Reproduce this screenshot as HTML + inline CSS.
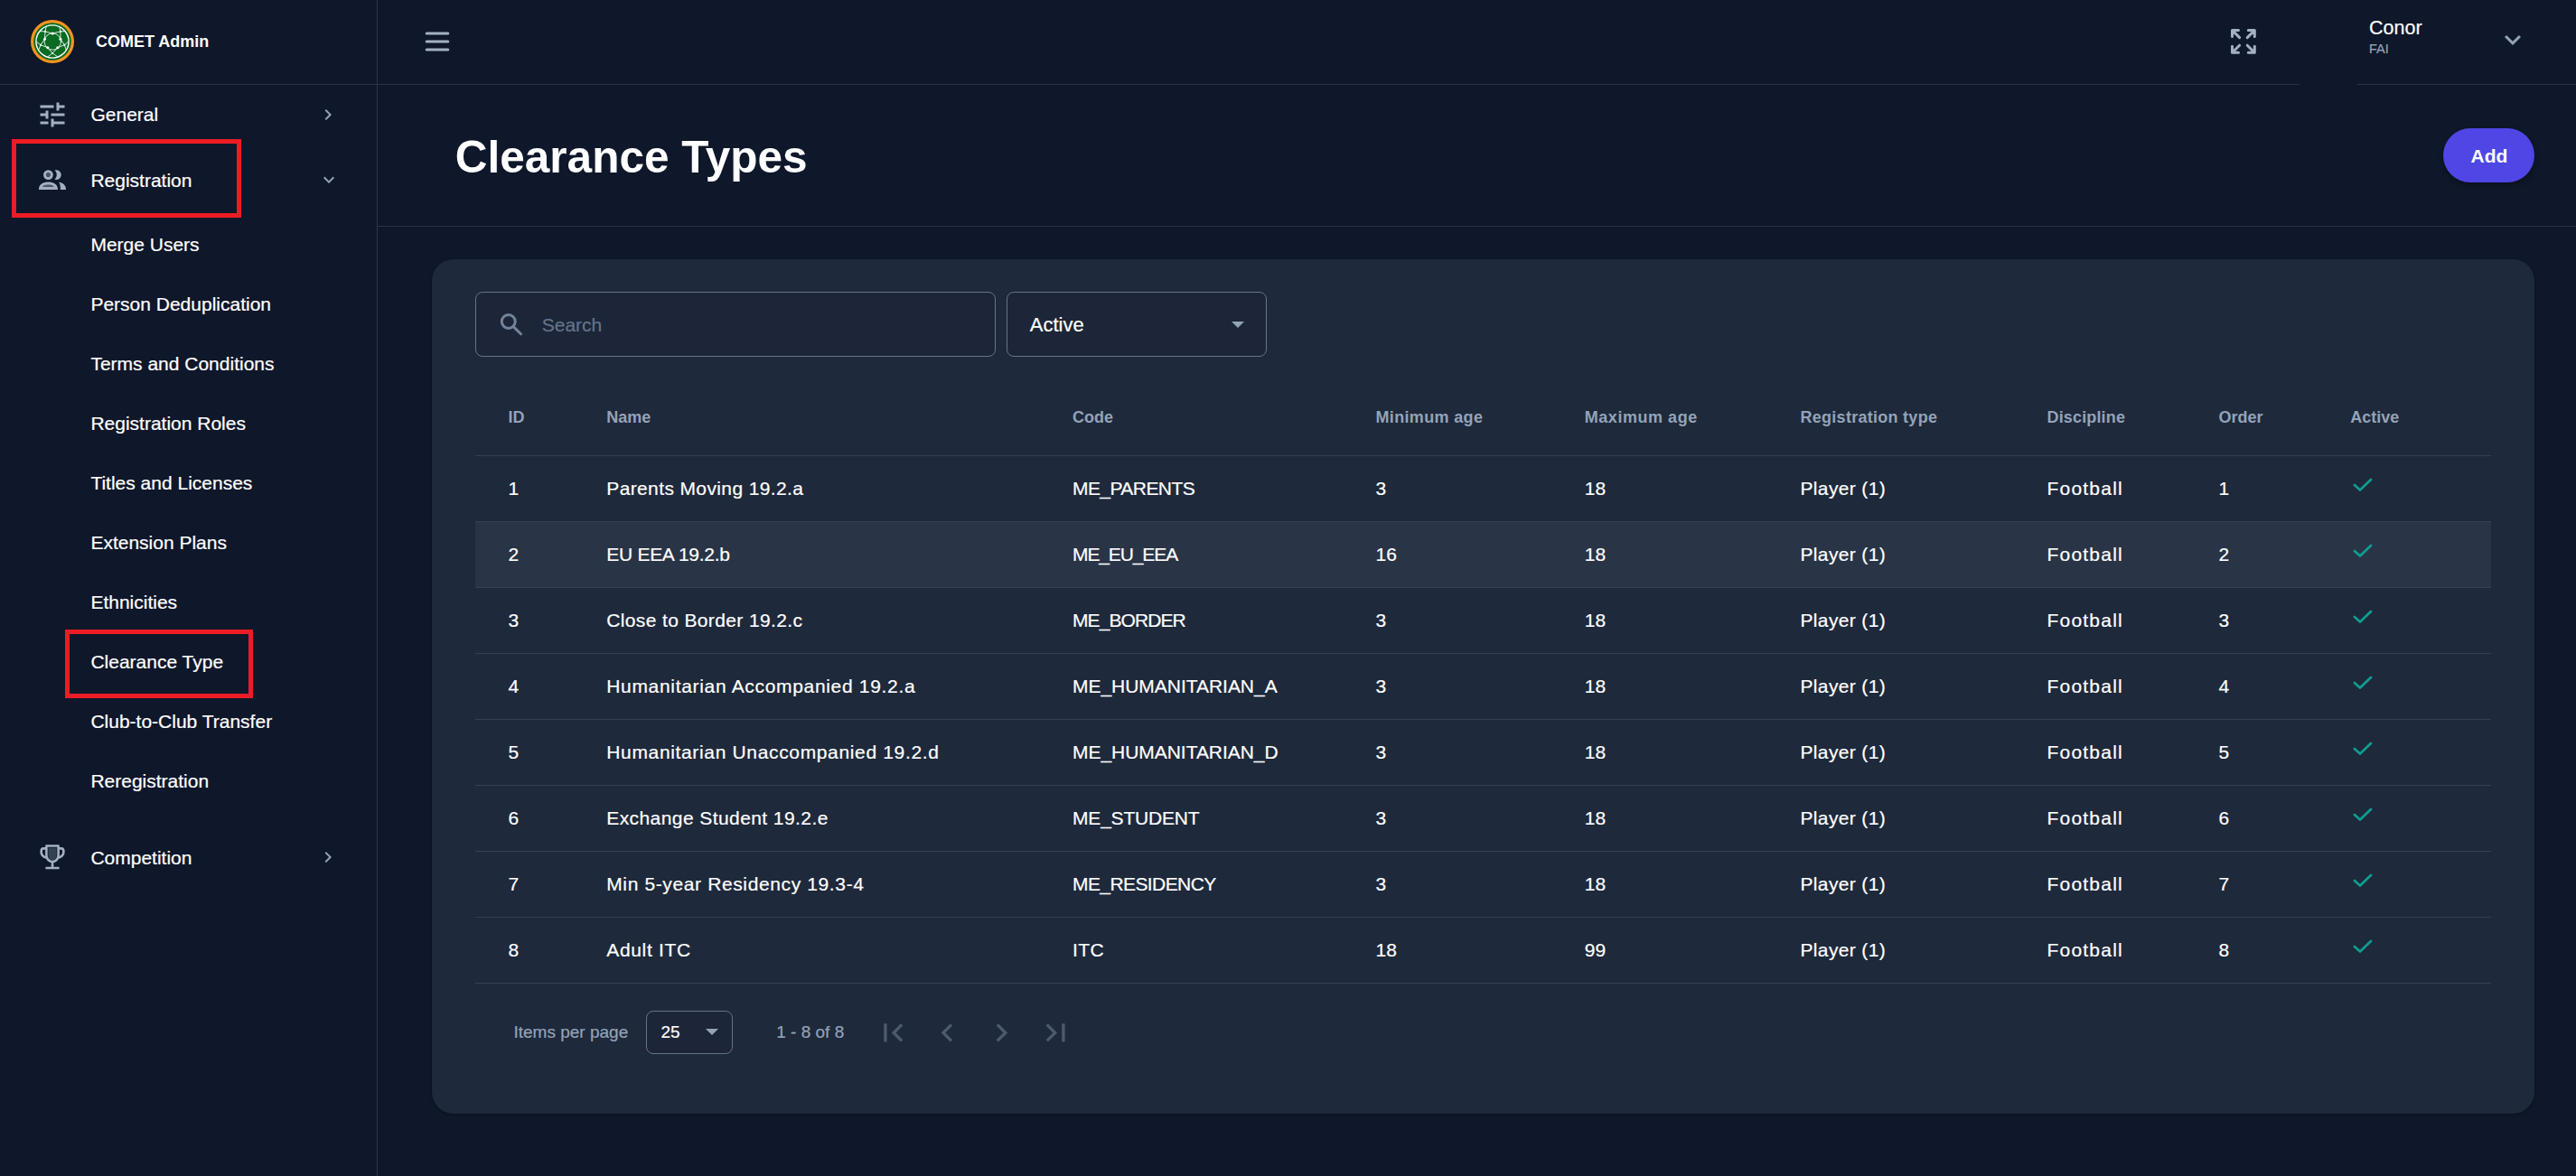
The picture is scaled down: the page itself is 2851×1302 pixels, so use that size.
<!DOCTYPE html>
<html><head><meta charset="utf-8"><title>Clearance Types</title>
<style>
html,body{margin:0;padding:0;}
body{width:2851px;height:1302px;background:#0f172a;position:relative;overflow:hidden;font-family:"Liberation Sans",sans-serif;}
.t{position:absolute;white-space:nowrap;}
.n{-webkit-text-stroke:0.2px currentColor;}
.r{position:absolute;box-sizing:border-box;}
svg{position:absolute;overflow:visible;}
</style></head><body>
<div class="r" style="left:417px;top:0px;width:1px;height:1302px;background:#2c3748"></div>
<div class="r" style="left:0px;top:93px;width:417px;height:1px;background:#283344"></div>
<svg style="left:34px;top:22px" width="48" height="48" viewBox="0 0 48 48">
<circle cx="24" cy="24" r="24" fill="#f7931e"/>
<circle cx="24" cy="24" r="20.8" fill="#0a6b22"/>
<circle cx="24" cy="24" r="18.1" fill="none" stroke="#fff" stroke-width="1.4"/>
<g stroke="#fff" stroke-width="0.85" fill="none" stroke-linecap="round">
<circle cx="24.3" cy="24" r="9.2"/>
<path d="M16 12.9 L24.2 15 L32.9 12.9"/>
<path d="M16 12.9 L17.2 7.2 M32.9 12.9 L31.8 7.2 M16 12.9 L10 12.6 M32.9 12.9 L38 12.6"/>
<path d="M16 12.9 L15.5 21.2 M32.9 12.9 L32.9 21.2"/>
<path d="M15.5 21.2 L11 27.7 L18.9 30.8 M32.9 21.2 L37.4 27.7 L29.8 30.8"/>
<path d="M11 27.7 L6.8 24.6 M11 27.7 L8.9 33 M37.4 27.7 L41.2 24.6 M37.4 27.7 L39.1 33"/>
<path d="M18.9 30.8 L24.1 37 L29.8 30.8 M24.1 37 L19.3 40.5 M24.1 37 L29.3 40.5"/>
</g>
<g fill="#fff"><circle cx="24.2" cy="15" r="1.6"/><circle cx="15.5" cy="21.2" r="1.5"/><circle cx="32.9" cy="21.2" r="1.5"/>
<circle cx="18.9" cy="30.8" r="1.5"/><circle cx="29.8" cy="30.8" r="1.5"/><circle cx="16" cy="12.9" r="1"/><circle cx="32.9" cy="12.9" r="1"/>
<circle cx="11" cy="27.7" r="1"/><circle cx="37.4" cy="27.7" r="1"/><circle cx="24.1" cy="37" r="1"/></g>
</svg>
<div class="t" style="left:106.00px;top:36.76px;font-size:18px;line-height:18px;color:#ffffff;font-weight:700;">COMET Admin</div>
<svg style="left:40px;top:109px" width="36" height="36" viewBox="0 0 24 24"><path fill="#a3b0c2" d="M3 17v2h6v-2H3zM3 5v2h10V5H3zm10 16v-2h8v-2h-8v-2h-2v6h2zM7 9v2H3v2h4v2h2V9H7zm14 4v-2H11v2h10zm-6-4h2V7h4V5h-4V3h-2v6z"/></svg>
<div class="t n" style="left:100.50px;top:116.22px;font-size:21px;line-height:21px;color:#ffffff;font-weight:400;">General</div>
<svg style="left:351px;top:115px" width="24" height="24" viewBox="0 0 24 24"><path fill="#94a3b8" d="M10 6L8.59 7.41 13.17 12l-4.58 4.59L10 18l6-6z"/></svg>
<svg style="left:36px;top:176px" width="44" height="44" viewBox="0 0 44 44">
<circle cx="17.4" cy="17.6" r="3.85" fill="none" stroke="#a3b0c2" stroke-width="3.1"/>
<circle cx="17.4" cy="17.6" r="2.2" fill="#4a5568"/>
<path fill="#a3b0c2" d="M24.6 12.5 A5.4 5.4 0 1 1 24.6 22.7 A7 7 0 0 0 24.6 12.5z"/>
<path fill="#a3b0c2" d="M6.9 33.9 C6.9 28 12 25.6 17.45 25.6 C23 25.6 28 28 28 33.9z"/>
<path fill="#4a5568" d="M10.8 31 C12 29 14.5 28.6 17.4 28.6 C20.3 28.6 22.8 29 23.9 31z"/>
<path fill="#a3b0c2" d="M29.2 25.8 C33.5 26.5 37 28.6 37 33.9 H30.9 C30.9 30 30.5 27.5 29.2 25.8z"/>
</svg>
<div class="t n" style="left:100.40px;top:188.62px;font-size:21px;line-height:21px;color:#ffffff;font-weight:400;">Registration</div>
<svg style="left:352px;top:186.5px" width="24" height="24" viewBox="0 0 24 24"><path fill="#94a3b8" d="M16.59 8.59L12 13.17 7.41 8.59 6 10l6 6 6-6z"/></svg>
<div class="r" style="left:13px;top:154px;width:254px;height:87px;border:5px solid #ed1c24"></div>
<div class="t n" style="left:100.40px;top:260.22px;font-size:21px;line-height:21px;color:#ffffff;font-weight:400;">Merge Users</div>
<div class="t n" style="left:100.40px;top:326.22px;font-size:21px;line-height:21px;color:#ffffff;font-weight:400;">Person Deduplication</div>
<div class="t n" style="left:100.40px;top:392.22px;font-size:21px;line-height:21px;color:#ffffff;font-weight:400;">Terms and Conditions</div>
<div class="t n" style="left:100.40px;top:458.22px;font-size:21px;line-height:21px;color:#ffffff;font-weight:400;">Registration Roles</div>
<div class="t n" style="left:100.40px;top:524.22px;font-size:21px;line-height:21px;color:#ffffff;font-weight:400;">Titles and Licenses</div>
<div class="t n" style="left:100.40px;top:590.22px;font-size:21px;line-height:21px;color:#ffffff;font-weight:400;">Extension Plans</div>
<div class="t n" style="left:100.40px;top:656.22px;font-size:21px;line-height:21px;color:#ffffff;font-weight:400;">Ethnicities</div>
<div class="t n" style="left:100.40px;top:722.22px;font-size:21px;line-height:21px;color:#ffffff;font-weight:400;">Clearance Type</div>
<div class="t n" style="left:100.40px;top:788.22px;font-size:21px;line-height:21px;color:#ffffff;font-weight:400;">Club-to-Club Transfer</div>
<div class="t n" style="left:100.40px;top:854.22px;font-size:21px;line-height:21px;color:#ffffff;font-weight:400;">Reregistration</div>
<div class="r" style="left:72px;top:697px;width:208px;height:76px;border:5px solid #ed1c24"></div>
<svg style="left:36px;top:926px" width="44" height="44" viewBox="0 0 44 44">
<path fill="#334155" d="M17.5 12.5 H26.5 V21 C26.5 24 24.5 26 22 26 C19.5 26 17.5 24 17.5 21z"/>
<path fill="none" stroke="#a3b0c2" stroke-width="2.6" stroke-linejoin="round" d="M15.4 10.5 H28.6 V21 C28.6 25 25.6 28 22 28 C18.4 28 15.4 25 15.4 21z"/>
<path fill="none" stroke="#a3b0c2" stroke-width="2.6" d="M15.4 13.4 H12 C10 13.4 9.6 15 9.6 17 C9.6 20.5 12.5 23 16 23.8 M28.6 13.4 H32 C34 13.4 34.4 15 34.4 17 C34.4 20.5 31.5 23 28 23.8"/>
<path fill="none" stroke="#a3b0c2" stroke-width="2.6" d="M22 28 V35 M14.4 35 H29.6"/>
</svg>
<div class="t n" style="left:100.40px;top:938.52px;font-size:21px;line-height:21px;color:#ffffff;font-weight:400;">Competition</div>
<svg style="left:351px;top:936.7px" width="24" height="24" viewBox="0 0 24 24"><path fill="#94a3b8" d="M10 6L8.59 7.41 13.17 12l-4.58 4.59L10 18l6-6z"/></svg>
<div class="r" style="left:418px;top:93px;width:2127px;height:1px;background:#283344"></div>
<div class="r" style="left:2609px;top:93px;width:242px;height:1px;background:#283344"></div>
<svg style="left:466px;top:30px" width="36" height="32" viewBox="0 0 36 32"><g stroke="#a3b0c2" stroke-width="3" stroke-linecap="round"><line x1="6.2" y1="7" x2="29.8" y2="7"/><line x1="6.2" y1="16" x2="29.8" y2="16"/><line x1="6.2" y1="25" x2="29.8" y2="25"/></g></svg>
<svg style="left:2469px;top:32px" width="28" height="28" viewBox="0 0 28 28"><g stroke="#a3b0c2" stroke-width="3" fill="none" stroke-linecap="round" stroke-linejoin="round">
<path d="M1.5 8.5 V1.5 H8.5 M1.8 1.8 L9.6 9.6"/>
<path d="M26.3 8.5 V1.5 H19.3 M26 1.8 L18.2 9.6"/>
<path d="M1.5 19.3 V26.3 H8.5 M1.8 26 L9.6 18.2"/>
<path d="M26.3 19.3 V26.3 H19.3 M26 26 L18.2 18.2"/>
</g></svg>
<div class="t n" style="left:2622.00px;top:20.80px;font-size:21.5px;line-height:21.5px;color:#ffffff;font-weight:400;">Conor</div>
<div class="t n" style="left:2622.00px;top:47.43px;font-size:14.5px;line-height:14.5px;color:#94a3b8;font-weight:400;">FAI</div>
<svg style="left:2763px;top:25.8px" width="36.0" height="36.0" viewBox="0 0 24 24"><path fill="#94a3b8" d="M16.59 8.59L12 13.17 7.41 8.59 6 10l6 6 6-6z"/></svg>
<div class="t" style="left:503.80px;top:149.10px;font-size:49.5px;line-height:49.5px;color:#ffffff;font-weight:700;">Clearance Types</div>
<div class="r" style="left:2704px;top:142px;width:101px;height:60px;background:#4f46e5;border-radius:30px;box-shadow:0 3px 6px rgba(0,0,0,0.35)"></div>
<div class="t" style="left:2734.50px;top:162.22px;font-size:21px;line-height:21px;color:#ffffff;font-weight:700;">Add</div>
<div class="r" style="left:418px;top:250px;width:2433px;height:1px;background:#283344"></div>
<div class="r" style="left:478px;top:287px;width:2327px;height:946px;background:#1e293b;border-radius:24px;box-shadow:0 1px 3px rgba(0,0,0,0.35)"></div>
<div class="r" style="left:526px;top:323px;width:576px;height:72px;border:1px solid #64748b;border-radius:8px;background:#1c2638"></div>
<svg style="left:550px;top:343px" width="32" height="32" viewBox="0 0 32 32"><circle cx="12.75" cy="13" r="7.5" fill="none" stroke="#73839a" stroke-width="3"/><line x1="18.2" y1="18.6" x2="26.5" y2="26.8" stroke="#73839a" stroke-width="3" stroke-linecap="round"/></svg>
<div class="t n" style="left:599.75px;top:349.22px;font-size:21px;line-height:21px;color:#64748b;font-weight:400;">Search</div>
<div class="r" style="left:1114px;top:323px;width:288px;height:72px;border:1px solid #64748b;border-radius:8px;background:#1c2638"></div>
<div class="t n" style="left:1139.75px;top:348.63px;font-size:22px;line-height:22px;color:#ffffff;font-weight:400;">Active</div>
<svg style="left:1363px;top:356px" width="14" height="7" viewBox="0 0 14 7"><path d="M0 0H14L7 7z" fill="#94a3b8"/></svg>
<div class="t" style="left:562.50px;top:452.76px;font-size:18px;line-height:18px;color:#94a3b8;font-weight:700;">ID</div>
<div class="t" style="left:671.25px;top:452.76px;font-size:18px;line-height:18px;color:#94a3b8;font-weight:700;">Name</div>
<div class="t" style="left:1187.00px;top:452.76px;font-size:18px;line-height:18px;color:#94a3b8;font-weight:700;">Code</div>
<div class="t" style="left:1522.50px;top:452.76px;font-size:18px;line-height:18px;color:#94a3b8;font-weight:700;letter-spacing:0.342px;">Minimum age</div>
<div class="t" style="left:1753.75px;top:452.76px;font-size:18px;line-height:18px;color:#94a3b8;font-weight:700;letter-spacing:0.539px;">Maximum age</div>
<div class="t" style="left:1992.50px;top:452.76px;font-size:18px;line-height:18px;color:#94a3b8;font-weight:700;letter-spacing:0.276px;">Registration type</div>
<div class="t" style="left:2265.50px;top:452.76px;font-size:18px;line-height:18px;color:#94a3b8;font-weight:700;letter-spacing:0.157px;">Discipline</div>
<div class="t" style="left:2455.50px;top:452.76px;font-size:18px;line-height:18px;color:#94a3b8;font-weight:700;">Order</div>
<div class="t" style="left:2601.30px;top:452.76px;font-size:18px;line-height:18px;color:#94a3b8;font-weight:700;">Active</div>
<div class="r" style="left:526px;top:577px;width:2231px;height:73px;background:#293446"></div>
<div class="r" style="left:526px;top:504px;width:2231px;height:1px;background:#334155"></div>
<div class="r" style="left:526px;top:577px;width:2231px;height:1px;background:#334155"></div>
<div class="r" style="left:526px;top:650px;width:2231px;height:1px;background:#334155"></div>
<div class="r" style="left:526px;top:723px;width:2231px;height:1px;background:#334155"></div>
<div class="r" style="left:526px;top:796px;width:2231px;height:1px;background:#334155"></div>
<div class="r" style="left:526px;top:869px;width:2231px;height:1px;background:#334155"></div>
<div class="r" style="left:526px;top:942px;width:2231px;height:1px;background:#334155"></div>
<div class="r" style="left:526px;top:1015px;width:2231px;height:1px;background:#334155"></div>
<div class="r" style="left:526px;top:1088px;width:2231px;height:1px;background:#334155"></div>
<div class="t n" style="left:562.50px;top:530.47px;font-size:21px;line-height:21px;color:#ffffff;font-weight:400;">1</div>
<div class="t n" style="left:671.25px;top:530.47px;font-size:21px;line-height:21px;color:#ffffff;font-weight:400;letter-spacing:0.378px;">Parents Moving 19.2.a</div>
<div class="t n" style="left:1187.00px;top:530.47px;font-size:21px;line-height:21px;color:#ffffff;font-weight:400;letter-spacing:-0.570px;">ME_PARENTS</div>
<div class="t n" style="left:1522.50px;top:530.47px;font-size:21px;line-height:21px;color:#ffffff;font-weight:400;">3</div>
<div class="t n" style="left:1753.75px;top:530.47px;font-size:21px;line-height:21px;color:#ffffff;font-weight:400;">18</div>
<div class="t n" style="left:1992.50px;top:530.47px;font-size:21px;line-height:21px;color:#ffffff;font-weight:400;letter-spacing:0.350px;">Player (1)</div>
<div class="t n" style="left:2265.50px;top:530.47px;font-size:21px;line-height:21px;color:#ffffff;font-weight:400;letter-spacing:1.209px;">Football</div>
<div class="t n" style="left:2455.50px;top:530.47px;font-size:21px;line-height:21px;color:#ffffff;font-weight:400;">1</div>
<svg style="left:2600px;top:525px" width="30" height="24" viewBox="0 0 30 24"><polyline points="5.9,12 12,17.5 24,5.9" fill="none" stroke="#0f9d8e" stroke-width="2.8" stroke-linecap="round" stroke-linejoin="round"/></svg>
<div class="t n" style="left:562.50px;top:603.47px;font-size:21px;line-height:21px;color:#ffffff;font-weight:400;">2</div>
<div class="t n" style="left:671.25px;top:603.47px;font-size:21px;line-height:21px;color:#ffffff;font-weight:400;letter-spacing:-0.284px;">EU EEA 19.2.b</div>
<div class="t n" style="left:1187.00px;top:603.47px;font-size:21px;line-height:21px;color:#ffffff;font-weight:400;letter-spacing:-1.110px;">ME_EU_EEA</div>
<div class="t n" style="left:1522.50px;top:603.47px;font-size:21px;line-height:21px;color:#ffffff;font-weight:400;">16</div>
<div class="t n" style="left:1753.75px;top:603.47px;font-size:21px;line-height:21px;color:#ffffff;font-weight:400;">18</div>
<div class="t n" style="left:1992.50px;top:603.47px;font-size:21px;line-height:21px;color:#ffffff;font-weight:400;letter-spacing:0.350px;">Player (1)</div>
<div class="t n" style="left:2265.50px;top:603.47px;font-size:21px;line-height:21px;color:#ffffff;font-weight:400;letter-spacing:1.209px;">Football</div>
<div class="t n" style="left:2455.50px;top:603.47px;font-size:21px;line-height:21px;color:#ffffff;font-weight:400;">2</div>
<svg style="left:2600px;top:598px" width="30" height="24" viewBox="0 0 30 24"><polyline points="5.9,12 12,17.5 24,5.9" fill="none" stroke="#0f9d8e" stroke-width="2.8" stroke-linecap="round" stroke-linejoin="round"/></svg>
<div class="t n" style="left:562.50px;top:676.47px;font-size:21px;line-height:21px;color:#ffffff;font-weight:400;">3</div>
<div class="t n" style="left:671.25px;top:676.47px;font-size:21px;line-height:21px;color:#ffffff;font-weight:400;letter-spacing:0.368px;">Close to Border 19.2.c</div>
<div class="t n" style="left:1187.00px;top:676.47px;font-size:21px;line-height:21px;color:#ffffff;font-weight:400;letter-spacing:-0.919px;">ME_BORDER</div>
<div class="t n" style="left:1522.50px;top:676.47px;font-size:21px;line-height:21px;color:#ffffff;font-weight:400;">3</div>
<div class="t n" style="left:1753.75px;top:676.47px;font-size:21px;line-height:21px;color:#ffffff;font-weight:400;">18</div>
<div class="t n" style="left:1992.50px;top:676.47px;font-size:21px;line-height:21px;color:#ffffff;font-weight:400;letter-spacing:0.350px;">Player (1)</div>
<div class="t n" style="left:2265.50px;top:676.47px;font-size:21px;line-height:21px;color:#ffffff;font-weight:400;letter-spacing:1.209px;">Football</div>
<div class="t n" style="left:2455.50px;top:676.47px;font-size:21px;line-height:21px;color:#ffffff;font-weight:400;">3</div>
<svg style="left:2600px;top:671px" width="30" height="24" viewBox="0 0 30 24"><polyline points="5.9,12 12,17.5 24,5.9" fill="none" stroke="#0f9d8e" stroke-width="2.8" stroke-linecap="round" stroke-linejoin="round"/></svg>
<div class="t n" style="left:562.50px;top:749.47px;font-size:21px;line-height:21px;color:#ffffff;font-weight:400;">4</div>
<div class="t n" style="left:671.25px;top:749.47px;font-size:21px;line-height:21px;color:#ffffff;font-weight:400;letter-spacing:0.678px;">Humanitarian Accompanied 19.2.a</div>
<div class="t n" style="left:1187.00px;top:749.47px;font-size:21px;line-height:21px;color:#ffffff;font-weight:400;letter-spacing:-0.030px;">ME_HUMANITARIAN_A</div>
<div class="t n" style="left:1522.50px;top:749.47px;font-size:21px;line-height:21px;color:#ffffff;font-weight:400;">3</div>
<div class="t n" style="left:1753.75px;top:749.47px;font-size:21px;line-height:21px;color:#ffffff;font-weight:400;">18</div>
<div class="t n" style="left:1992.50px;top:749.47px;font-size:21px;line-height:21px;color:#ffffff;font-weight:400;letter-spacing:0.350px;">Player (1)</div>
<div class="t n" style="left:2265.50px;top:749.47px;font-size:21px;line-height:21px;color:#ffffff;font-weight:400;letter-spacing:1.209px;">Football</div>
<div class="t n" style="left:2455.50px;top:749.47px;font-size:21px;line-height:21px;color:#ffffff;font-weight:400;">4</div>
<svg style="left:2600px;top:744px" width="30" height="24" viewBox="0 0 30 24"><polyline points="5.9,12 12,17.5 24,5.9" fill="none" stroke="#0f9d8e" stroke-width="2.8" stroke-linecap="round" stroke-linejoin="round"/></svg>
<div class="t n" style="left:562.50px;top:822.47px;font-size:21px;line-height:21px;color:#ffffff;font-weight:400;">5</div>
<div class="t n" style="left:671.25px;top:822.47px;font-size:21px;line-height:21px;color:#ffffff;font-weight:400;letter-spacing:0.655px;">Humanitarian Unaccompanied 19.2.d</div>
<div class="t n" style="left:1187.00px;top:822.47px;font-size:21px;line-height:21px;color:#ffffff;font-weight:400;letter-spacing:-0.040px;">ME_HUMANITARIAN_D</div>
<div class="t n" style="left:1522.50px;top:822.47px;font-size:21px;line-height:21px;color:#ffffff;font-weight:400;">3</div>
<div class="t n" style="left:1753.75px;top:822.47px;font-size:21px;line-height:21px;color:#ffffff;font-weight:400;">18</div>
<div class="t n" style="left:1992.50px;top:822.47px;font-size:21px;line-height:21px;color:#ffffff;font-weight:400;letter-spacing:0.350px;">Player (1)</div>
<div class="t n" style="left:2265.50px;top:822.47px;font-size:21px;line-height:21px;color:#ffffff;font-weight:400;letter-spacing:1.209px;">Football</div>
<div class="t n" style="left:2455.50px;top:822.47px;font-size:21px;line-height:21px;color:#ffffff;font-weight:400;">5</div>
<svg style="left:2600px;top:817px" width="30" height="24" viewBox="0 0 30 24"><polyline points="5.9,12 12,17.5 24,5.9" fill="none" stroke="#0f9d8e" stroke-width="2.8" stroke-linecap="round" stroke-linejoin="round"/></svg>
<div class="t n" style="left:562.50px;top:895.47px;font-size:21px;line-height:21px;color:#ffffff;font-weight:400;">6</div>
<div class="t n" style="left:671.25px;top:895.47px;font-size:21px;line-height:21px;color:#ffffff;font-weight:400;letter-spacing:0.419px;">Exchange Student 19.2.e</div>
<div class="t n" style="left:1187.00px;top:895.47px;font-size:21px;line-height:21px;color:#ffffff;font-weight:400;letter-spacing:-0.187px;">ME_STUDENT</div>
<div class="t n" style="left:1522.50px;top:895.47px;font-size:21px;line-height:21px;color:#ffffff;font-weight:400;">3</div>
<div class="t n" style="left:1753.75px;top:895.47px;font-size:21px;line-height:21px;color:#ffffff;font-weight:400;">18</div>
<div class="t n" style="left:1992.50px;top:895.47px;font-size:21px;line-height:21px;color:#ffffff;font-weight:400;letter-spacing:0.350px;">Player (1)</div>
<div class="t n" style="left:2265.50px;top:895.47px;font-size:21px;line-height:21px;color:#ffffff;font-weight:400;letter-spacing:1.209px;">Football</div>
<div class="t n" style="left:2455.50px;top:895.47px;font-size:21px;line-height:21px;color:#ffffff;font-weight:400;">6</div>
<svg style="left:2600px;top:890px" width="30" height="24" viewBox="0 0 30 24"><polyline points="5.9,12 12,17.5 24,5.9" fill="none" stroke="#0f9d8e" stroke-width="2.8" stroke-linecap="round" stroke-linejoin="round"/></svg>
<div class="t n" style="left:562.50px;top:968.47px;font-size:21px;line-height:21px;color:#ffffff;font-weight:400;">7</div>
<div class="t n" style="left:671.25px;top:968.47px;font-size:21px;line-height:21px;color:#ffffff;font-weight:400;letter-spacing:0.624px;">Min 5-year Residency 19.3-4</div>
<div class="t n" style="left:1187.00px;top:968.47px;font-size:21px;line-height:21px;color:#ffffff;font-weight:400;letter-spacing:-0.584px;">ME_RESIDENCY</div>
<div class="t n" style="left:1522.50px;top:968.47px;font-size:21px;line-height:21px;color:#ffffff;font-weight:400;">3</div>
<div class="t n" style="left:1753.75px;top:968.47px;font-size:21px;line-height:21px;color:#ffffff;font-weight:400;">18</div>
<div class="t n" style="left:1992.50px;top:968.47px;font-size:21px;line-height:21px;color:#ffffff;font-weight:400;letter-spacing:0.350px;">Player (1)</div>
<div class="t n" style="left:2265.50px;top:968.47px;font-size:21px;line-height:21px;color:#ffffff;font-weight:400;letter-spacing:1.209px;">Football</div>
<div class="t n" style="left:2455.50px;top:968.47px;font-size:21px;line-height:21px;color:#ffffff;font-weight:400;">7</div>
<svg style="left:2600px;top:963px" width="30" height="24" viewBox="0 0 30 24"><polyline points="5.9,12 12,17.5 24,5.9" fill="none" stroke="#0f9d8e" stroke-width="2.8" stroke-linecap="round" stroke-linejoin="round"/></svg>
<div class="t n" style="left:562.50px;top:1041.47px;font-size:21px;line-height:21px;color:#ffffff;font-weight:400;">8</div>
<div class="t n" style="left:671.25px;top:1041.47px;font-size:21px;line-height:21px;color:#ffffff;font-weight:400;letter-spacing:0.669px;">Adult ITC</div>
<div class="t n" style="left:1187.00px;top:1041.47px;font-size:21px;line-height:21px;color:#ffffff;font-weight:400;letter-spacing:0.426px;">ITC</div>
<div class="t n" style="left:1522.50px;top:1041.47px;font-size:21px;line-height:21px;color:#ffffff;font-weight:400;">18</div>
<div class="t n" style="left:1753.75px;top:1041.47px;font-size:21px;line-height:21px;color:#ffffff;font-weight:400;">99</div>
<div class="t n" style="left:1992.50px;top:1041.47px;font-size:21px;line-height:21px;color:#ffffff;font-weight:400;letter-spacing:0.350px;">Player (1)</div>
<div class="t n" style="left:2265.50px;top:1041.47px;font-size:21px;line-height:21px;color:#ffffff;font-weight:400;letter-spacing:1.209px;">Football</div>
<div class="t n" style="left:2455.50px;top:1041.47px;font-size:21px;line-height:21px;color:#ffffff;font-weight:400;">8</div>
<svg style="left:2600px;top:1036px" width="30" height="24" viewBox="0 0 30 24"><polyline points="5.9,12 12,17.5 24,5.9" fill="none" stroke="#0f9d8e" stroke-width="2.8" stroke-linecap="round" stroke-linejoin="round"/></svg>
<div class="t n" style="left:568.50px;top:1132.67px;font-size:19px;line-height:19px;color:#94a3b8;font-weight:400;">Items per page</div>
<div class="r" style="left:715px;top:1119px;width:96px;height:48px;border:1px solid #64748b;border-radius:8px;background:#1c2638"></div>
<div class="t n" style="left:731.50px;top:1132.92px;font-size:19px;line-height:19px;color:#ffffff;font-weight:400;">25</div>
<svg style="left:781px;top:1139px" width="14" height="7" viewBox="0 0 14 7"><path d="M0 0H14L7 7z" fill="#94a3b8"/></svg>
<div class="t n" style="left:859.25px;top:1132.92px;font-size:19px;line-height:19px;color:#94a3b8;font-weight:400;">1 - 8 of 8</div>
<svg style="left:968px;top:1123px" width="40.8" height="40.8" viewBox="0 0 24 24"><path fill="#4b5a6e" d="M18.41 16.59L13.82 12l4.59-4.59L17 6l-6 6 6 6zM6 6h2v12H6z"/></svg>
<svg style="left:1028.4px;top:1123px" width="40.8" height="40.8" viewBox="0 0 24 24"><path fill="#4b5a6e" d="M15.41 7.41L14 6l-6 6 6 6 1.41-1.41L10.83 12z"/></svg>
<svg style="left:1088.4px;top:1123px" width="40.8" height="40.8" viewBox="0 0 24 24"><path fill="#4b5a6e" d="M10 6L8.59 7.41 13.17 12l-4.58 4.59L10 18l6-6z"/></svg>
<svg style="left:1148.3px;top:1123px" width="40.8" height="40.8" viewBox="0 0 24 24"><path fill="#4b5a6e" d="M5.59 7.41L10.18 12l-4.59 4.59L7 18l6-6-6-6zM16 6h2v12h-2z"/></svg>
</body></html>
